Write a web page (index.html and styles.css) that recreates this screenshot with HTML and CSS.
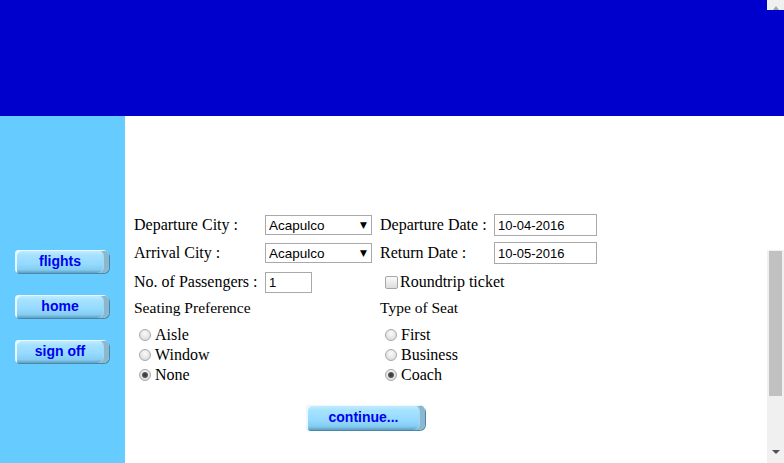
FILE: index.html
```html
<!DOCTYPE html>
<html>
<head>
<meta charset="utf-8">
<link rel="stylesheet" href="styles.css">
</head>
<body>
<div class="header"></div>
<div class="main">
  <nav class="side">
    <a class="btn">flights</a>
    <a class="btn">home</a>
    <a class="btn">sign off</a>
  </nav>
  <div class="content">
    <form class="form">
      <div class="lbl">Departure City :</div>
      <div class="cell"><span class="sel"><select><option>Acapulco</option></select><span class="arr">&#9660;</span></span></div>
      <div class="lbl">Departure Date :</div>
      <div class="cell"><input class="date" type="text" value="10-04-2016"></div>

      <div class="lbl">Arrival City :</div>
      <div class="cell"><span class="sel"><select><option>Acapulco</option></select><span class="arr">&#9660;</span></span></div>
      <div class="lbl">Return Date :</div>
      <div class="cell"><input class="date" type="text" value="10-05-2016"></div>

      <div class="lbl">No. of Passengers :</div>
      <div class="cell"><input class="pass" type="text" value="1"></div>
      <div class="cell span2 chk"><input type="checkbox" class="cb"><span>Roundtrip ticket</span></div>

      <div class="head span2">Seating Preference</div>
      <div class="head span2">Type of Seat</div>

      <div class="radios span2">
        <label class="rad"><input type="radio" name="s"><span>Aisle</span></label>
        <label class="rad"><input type="radio" name="s"><span>Window</span></label>
        <label class="rad"><input type="radio" name="s" checked><span>None</span></label>
      </div>
      <div class="radios span2">
        <label class="rad"><input type="radio" name="t"><span>First</span></label>
        <label class="rad"><input type="radio" name="t"><span>Business</span></label>
        <label class="rad"><input type="radio" name="t" checked><span>Coach</span></label>
      </div>
    </form>
    <div class="cont-row"><a class="btn wide">continue...</a></div>
  </div>
</div>
<div class="sb-top"><span class="up"></span></div>
<div class="scrollbar"><div class="thumb"></div><span class="down"></span></div>
</body>
</html>
```
FILE: styles.css
```css
html, body {
  margin: 0;
  padding: 0;
  height: 463px;
  overflow: hidden;
  background: #fff;
  font-family: "Liberation Serif", "Times New Roman", serif;
  font-size: 16px;
  color: #000;
}
.header {
  height: 116px;
  background: #0000cc;
}
.main {
  display: flex;
  height: 347px;
}
.side {
  width: 125px;
  flex: none;
  background: #66ccff;
  display: flex;
  flex-direction: column;
  align-items: flex-start;
  padding: 134px 0 0 15px;
  box-sizing: border-box;
  gap: 22px;
}
.btn {
  display: block;
  width: 94px;
  height: 23px;
  box-sizing: border-box;
  border-radius: 4px 6px 6px 4px;
  background: linear-gradient(#c8eeff 0, #a6e2ff 22%, #95daff 60%, #86cdf2 85%, #5f9fc4 100%);
  box-shadow: inset 3px 2px 0 -1px #e9f9ff, inset -5px 0 0 #8ab8cf, inset -6px 0 0 #a8d6ec, 1px 1px 0 #4c86a8;
  color: #0000f0;
  font: bold 14px "Liberation Sans", Arial, sans-serif;
  text-align: center;
  line-height: 22px;
  padding-right: 4px;
  text-decoration: none;
}
.btn.wide {
  width: 119px;
  height: 25px;
  line-height: 24px;
}
.content {
  flex: 1;
  padding: 95px 0 0 9px;
}
.form {
  display: grid;
  grid-template-columns: 131px 115px 114px 120px;
  grid-template-rows: 28px 28px 30px 22px auto;
  row-gap: 0;
  margin: 0;
}
.lbl, .cell, .head {
  display: flex;
  align-items: center;
  white-space: nowrap;
}
.head { font-size: 15.5px; }
.span2 { grid-column: span 2; }
.sel {
  position: relative;
  display: inline-block;
}
.sel select {
  appearance: none;
  -webkit-appearance: none;
  width: 107px;
  height: 20px;
  box-sizing: border-box;
  border: 1px solid #a9a9a9;
  background: #fff;
  font: 13.5px "Liberation Sans", Arial, sans-serif;
  padding: 0 0 0 3px;
  margin: 0;
  border-radius: 0;
  color: #000;
}
.sel .arr {
  position: absolute;
  right: 5px;
  top: 4px;
  font-size: 9px;
  line-height: 12px;
  font-family: "DejaVu Sans", sans-serif;
}
input[type=text] {
  box-sizing: border-box;
  border: 1px solid #a9a9a9;
  font: 13px "Liberation Sans", Arial, sans-serif;
  padding: 1px 3px;
  margin: 0;
  color: #000;
  outline: none;
}
.date { width: 103px; height: 22px; }
.pass { width: 47px; height: 21px; }
.chk { padding-left: 5px; }
.cb {
  appearance: none;
  -webkit-appearance: none;
  width: 13px;
  height: 13px;
  margin: 0 2px 0 0;
  border: 1px solid #a6a6a6;
  border-radius: 2px;
  background: linear-gradient(#fbfbfb, #dcdcdc);
  box-sizing: border-box;
}
.radios {
  display: flex;
  flex-direction: column;
  padding-top: 6px;
  padding-left: 5px;
}
.rad {
  display: flex;
  align-items: center;
  height: 20px;
  flex: none;
}
.rad input {
  appearance: none;
  -webkit-appearance: none;
  width: 12px;
  height: 12px;
  margin: 0 4px 0 0;
  border: 1px solid #a8a8a8;
  border-radius: 50%;
  background: radial-gradient(circle at 50% 35%, #fafafa, #d4d4d4);
  box-sizing: border-box;
  position: relative;
}
.rad input:checked::after {
  content: "";
  position: absolute;
  left: 2px;
  top: 2px;
  width: 6px;
  height: 6px;
  border-radius: 50%;
  background: radial-gradient(circle, #333 0, #555 60%, #888 100%);
}
.cont-row {
  padding: 20px 0 0 172px;
}
.sb-top {
  position: absolute;
  top: 0;
  right: 0;
  width: 17px;
  height: 10px;
  background: #f0f0f0;
}
.sb-top .up {
  position: absolute;
  left: 6px;
  top: 6px;
  width: 0;
  height: 0;
  border-left: 3px solid transparent;
  border-right: 3px solid transparent;
  border-bottom: 4px solid #a3a3a3;
}
.scrollbar {
  position: absolute;
  top: 250px;
  right: 0;
  width: 17px;
  height: 213px;
  background: #f0f0f0;
}
.thumb {
  position: absolute;
  left: 2px;
  top: 1px;
  width: 13px;
  height: 145px;
  background: #c1c1c1;
}
.down {
  position: absolute;
  left: 5px;
  top: 200px;
  width: 0;
  height: 0;
  border-left: 4px solid transparent;
  border-right: 4px solid transparent;
  border-top: 4px solid #505050;
}
```
